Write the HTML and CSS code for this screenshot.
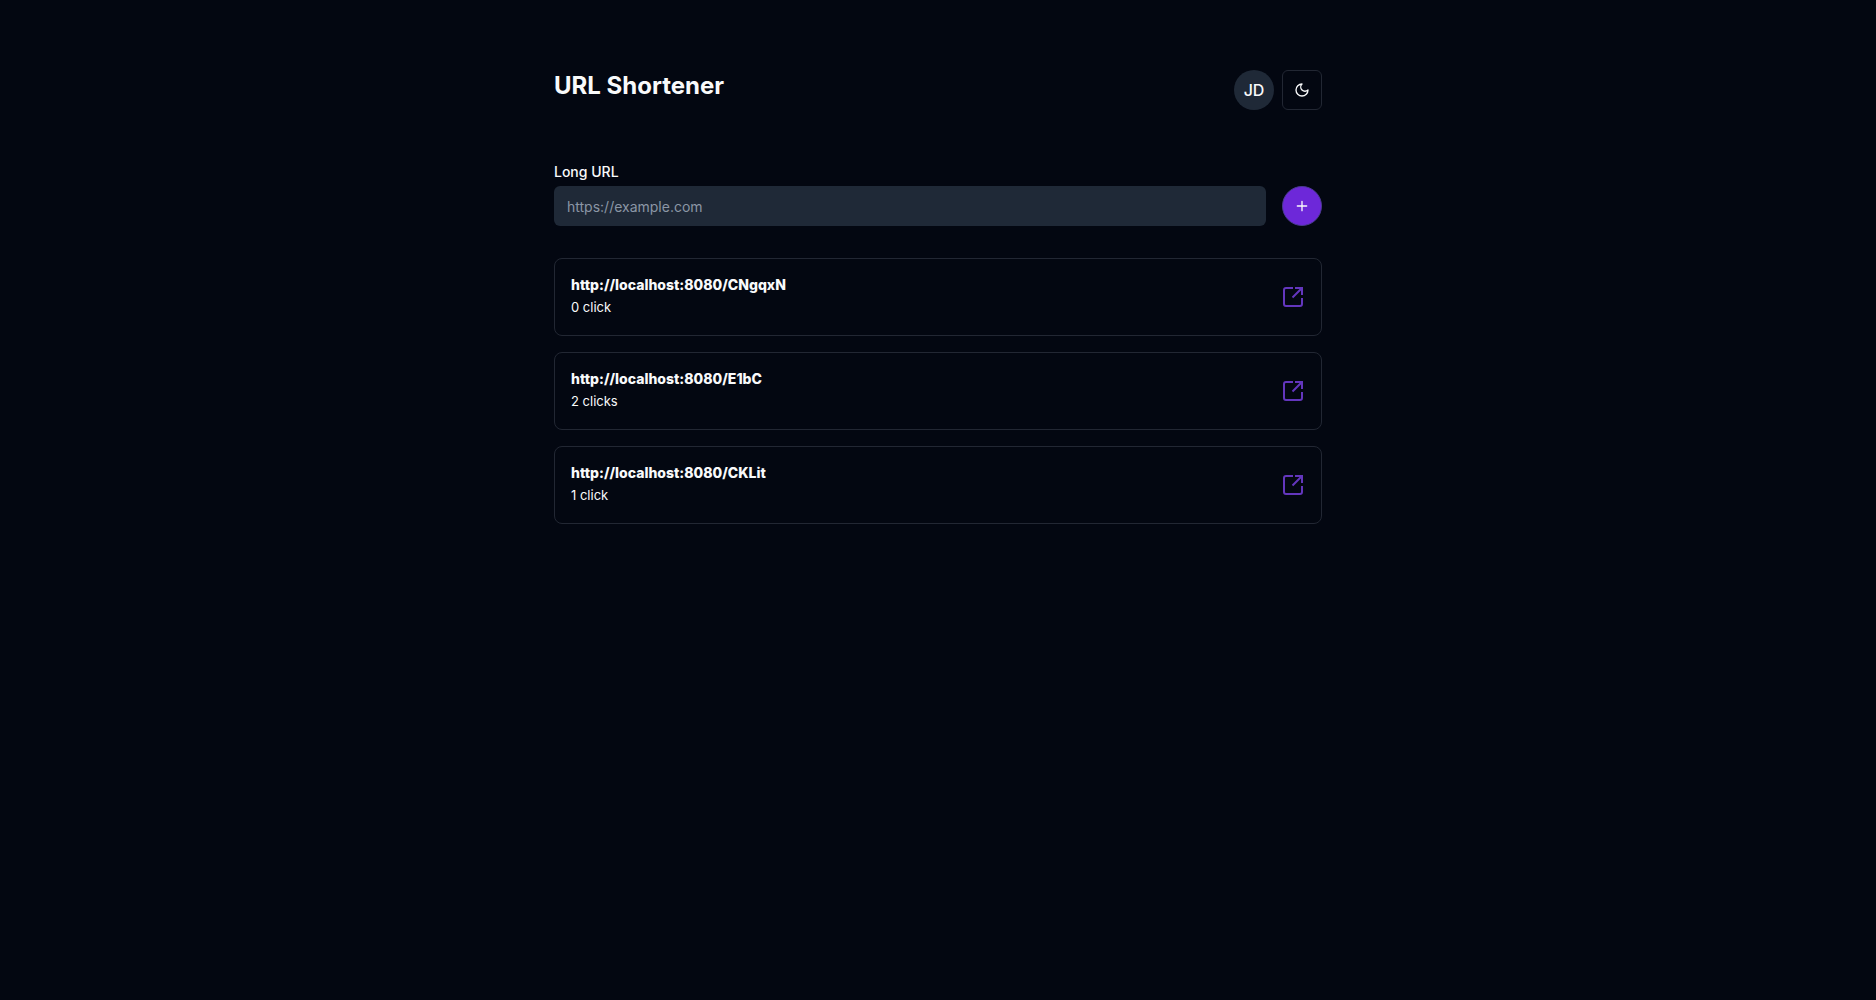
FILE: index.html
```html
<!DOCTYPE html>
<html lang="en">
<head>
  <meta charset="utf-8">
  <meta name="viewport" content="width=device-width, initial-scale=1">
  <title>URL Shortener</title>
  <link rel="stylesheet" href="styles.css">
</head>
<body>
  <svg class="sprite">
    <symbol id="icon-open" viewBox="0 0 24 24">
      <path d="M12 3H5a2 2 0 0 0-2 2v14a2 2 0 0 0 2 2h14a2 2 0 0 0 2-2v-6M14 3h7v7M21 3l-9.500 9.500"/>
    </symbol>
  </svg>
  <div class="container">
    <header class="header">
      <h1 class="title">URL Shortener</h1>
      <div class="actions">
        <button class="avatar" type="button" aria-label="Account">JD</button>
        <button class="theme-toggle" type="button" aria-label="Toggle theme">
          <svg class="icon" viewBox="0 0 24 24"><path d="M12 3a6 6 0 0 0 9 9 9 9 0 1 1-9-9Z"/></svg>
        </button>
      </div>
    </header>
    <main>
      <form class="form">
        <div class="field">
          <label class="label" for="long-url">Long URL</label>
          <input class="input" id="long-url" type="url" placeholder="https://example.com">
        </div>
        <button class="add" type="submit" aria-label="Shorten URL">
          <svg class="icon" viewBox="0 0 24 24"><path d="M5 12h14M12 5v14"/></svg>
        </button>
      </form>
      <ul class="links">
        <li class="card">
          <div>
            <h2 class="card-title">http://localhost:8080/CNgqxN</h2>
            <p class="clicks">0 click</p>
          </div>
          <a class="open" href="http://localhost:8080/CNgqxN" aria-label="Open link"><svg class="icon icon-large"><use href="#icon-open"/></svg></a>
        </li>
        <li class="card">
          <div>
            <h2 class="card-title">http://localhost:8080/E1bC</h2>
            <p class="clicks">2 clicks</p>
          </div>
          <a class="open" href="http://localhost:8080/E1bC" aria-label="Open link"><svg class="icon icon-large"><use href="#icon-open"/></svg></a>
        </li>
        <li class="card">
          <div>
            <h2 class="card-title">http://localhost:8080/CKLit</h2>
            <p class="clicks">1 click</p>
          </div>
          <a class="open" href="http://localhost:8080/CKLit" aria-label="Open link"><svg class="icon icon-large"><use href="#icon-open"/></svg></a>
        </li>
      </ul>
    </main>
  </div>
</body>
</html>
```
FILE: styles.css
```css
*,
*::before,
*::after {
  box-sizing: border-box;
}

body {
  margin: 0;
  min-height: 100vh;
  background: #030711;
  color: #f9fafb;
  font-family: Inter, "Liberation Sans", sans-serif;
  font-size: 16px;
  line-height: 24px;
}

h1,
h2,
p,
ul {
  margin: 0;
  padding: 0;
}

button,
input {
  font: inherit;
  color: inherit;
}

button {
  display: flex;
  align-items: center;
  justify-content: center;
  width: 40px;
  height: 40px;
  padding: 0;
  flex-shrink: 0;
  cursor: pointer;
}

.sprite {
  display: none;
}

.container {
  max-width: 800px;
  margin: 0 auto;
  padding: 70px 16px;
}

.header {
  display: flex;
  justify-content: space-between;
  margin-bottom: 52px;
}

.title {
  font-size: 24px;
  line-height: 32px;
  font-weight: 700;
}

.actions {
  display: flex;
  gap: 8px;
}

.avatar {
  border: 0;
  border-radius: 50%;
  background: #1f2937;
  font-weight: 500;
}

.theme-toggle {
  border: 1px solid #222733;
  border-radius: 6px;
  background: transparent;
}

.icon {
  display: block;
  width: 16px;
  height: 16px;
  fill: none;
  stroke: currentColor;
  stroke-width: 2;
  stroke-linecap: round;
  stroke-linejoin: round;
}

.form {
  display: flex;
  align-items: flex-end;
  gap: 16px;
  margin-bottom: 32px;
}

.field {
  flex: 1;
}

.label {
  display: block;
  margin-bottom: 4px;
  font-size: 14px;
  line-height: 20px;
  font-weight: 500;
}

.input {
  display: block;
  width: 100%;
  height: 40px;
  padding: 8px 13px;
  border: 0;
  border-radius: 6px;
  background: #1f2937;
  font-size: 14px;
  line-height: 20px;
}

.input::placeholder {
  color: #8b96a5;
  opacity: 1;
}

.add {
  border: 1px solid #4b3a91;
  border-radius: 50%;
  background: #6d28d9;
}

.links {
  display: grid;
  gap: 16px;
  list-style: none;
}

.card {
  display: flex;
  align-items: center;
  justify-content: space-between;
  padding: 16px;
  border: 1px solid #222733;
  border-radius: 8px;
}

.card-title {
  font-size: 14px;
  line-height: 20px;
  font-weight: 800;
}

.clicks {
  margin: 2px 0;
  font-size: 13px;
  line-height: 20px;
}

.open {
  color: #6336bd;
}

.icon-large {
  width: 24px;
  height: 24px;
  stroke-linecap: butt;
  stroke-linejoin: miter;
}
```
